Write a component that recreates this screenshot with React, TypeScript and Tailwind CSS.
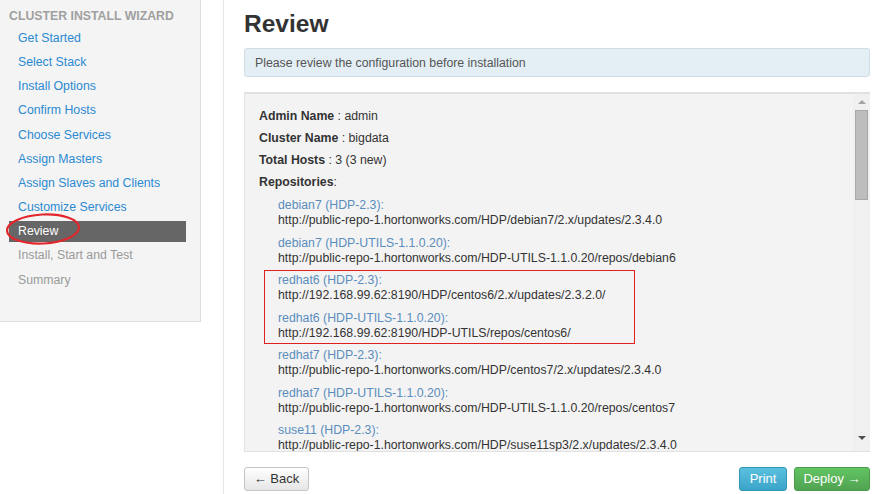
import React from "react";

const steps: { label: string; state: "link" | "active" | "disabled" }[] = [
  { label: "Get Started", state: "link" },
  { label: "Select Stack", state: "link" },
  { label: "Install Options", state: "link" },
  { label: "Confirm Hosts", state: "link" },
  { label: "Choose Services", state: "link" },
  { label: "Assign Masters", state: "link" },
  { label: "Assign Slaves and Clients", state: "link" },
  { label: "Customize Services", state: "link" },
  { label: "Review", state: "active" },
  { label: "Install, Start and Test", state: "disabled" },
  { label: "Summary", state: "disabled" },
];

const reposA = [
  { name: "debian7 (HDP-2.3):", url: "http://public-repo-1.hortonworks.com/HDP/debian7/2.x/updates/2.3.4.0" },
  { name: "debian7 (HDP-UTILS-1.1.0.20):", url: "http://public-repo-1.hortonworks.com/HDP-UTILS-1.1.0.20/repos/debian6" },
];
const reposB = [
  { name: "redhat6 (HDP-2.3):", url: "http://192.168.99.62:8190/HDP/centos6/2.x/updates/2.3.2.0/" },
  { name: "redhat6 (HDP-UTILS-1.1.0.20):", url: "http://192.168.99.62:8190/HDP-UTILS/repos/centos6/" },
];
const reposC = [
  { name: "redhat7 (HDP-2.3):", url: "http://public-repo-1.hortonworks.com/HDP/centos7/2.x/updates/2.3.4.0" },
  { name: "redhat7 (HDP-UTILS-1.1.0.20):", url: "http://public-repo-1.hortonworks.com/HDP-UTILS-1.1.0.20/repos/centos7" },
  { name: "suse11 (HDP-2.3):", url: "http://public-repo-1.hortonworks.com/HDP/suse11sp3/2.x/updates/2.3.4.0" },
];

function Repo({ name, url }: { name: string; url: string }) {
  return (
    <div className="leading-[15px] whitespace-nowrap">
      <div className="text-[#5a8dbd]">{name}</div>
      <div className="text-[#333]">{url}</div>
    </div>
  );
}

export default function App() {
  return (
    <div
      className="w-[882px] h-[494px] flex bg-white overflow-hidden text-[12.3px] text-[#333]"
      style={{ fontFamily: '"Liberation Sans", Arial, sans-serif' }}
    >
      {/* Sidebar */}
      <div className="w-[224px] h-full border-r border-[#e6e6e6] shrink-0">
        <div className="relative w-[201px] h-[322px] bg-[#f4f4f4] border-r border-b border-[#dddddd]">
          <div className="pl-[9px] pt-[9px] h-[26px] leading-[14px] font-bold text-[#a0a0a0] uppercase">
            Cluster Install Wizard
          </div>
          <div className="flex flex-col gap-[3.2px] mt-[1.5px]">
            {steps.map((s) => (
              <div
                key={s.label}
                className={
                  "ml-[9px] w-[177px] h-[21px] pl-[9px] flex items-center " +
                  (s.state === "active"
                    ? "bg-[#666666] text-white"
                    : s.state === "link"
                    ? "text-[#2b8ad2]"
                    : "text-[#9a9a9a]")
                }
              >
                {s.label}
              </div>
            ))}
          </div>
          {/* red annotation ellipse */}
          <svg className="absolute left-[4px] top-[210px]" width="80" height="38" viewBox="0 0 80 38">
            <ellipse cx="39" cy="19" rx="36" ry="14.5" fill="none" stroke="#e3262b" strokeWidth="2.2" transform="rotate(-3 39 19)" />
          </svg>
        </div>
      </div>

      {/* Main */}
      <div className="w-[626px] ml-[20px] flex flex-col">
        <div className="h-[48px] pt-[9px]">
          <h2 className="text-[24.5px] leading-[30px] font-bold text-[#333]">Review</h2>
        </div>
        <div className="h-[29px] bg-[#e4eff5] border border-[#cfdee6] rounded-[3px] pl-[10px] pt-[1px] flex items-center text-[#555]">
          Please review the configuration before installation
        </div>
        <div className="mt-[15px] h-[360px] bg-[#f3f3f3] border-t-2 border-b border-l border-[#e1e1e1] flex">
          <div className="flex-1 pl-[14px] pt-[15px] overflow-hidden">
            <div className="flex flex-col gap-[7px] leading-[15px]">
              <div>
                <span className="font-bold">Admin Name</span> : admin
              </div>
              <div>
                <span className="font-bold">Cluster Name</span> : bigdata
              </div>
              <div>
                <span className="font-bold">Total Hosts</span> : 3 (3 new)
              </div>
              <div>
                <span className="font-bold">Repositories</span>:
              </div>
            </div>
            <div className="pl-[19px] mt-[8px] flex flex-col gap-[7.5px]">
              {reposA.map((r) => (
                <Repo key={r.name} {...r} />
              ))}
              <div className="relative flex flex-col gap-[7.5px]">
                {reposB.map((r) => (
                  <Repo key={r.name} {...r} />
                ))}
                <div className="absolute left-[-14px] top-[-3.5px] w-[371px] h-[74px] border border-[#e01f1f]" />
              </div>
              {reposC.map((r) => (
                <Repo key={r.name} {...r} />
              ))}
            </div>
          </div>
          {/* scrollbar */}
          <div className="w-[17px] h-full bg-[#f0f0f0] flex flex-col items-center">
            <div className="h-[16px] flex items-center justify-center">
              <div className="w-0 h-0 border-l-[4px] border-r-[4px] border-b-[4px] border-l-transparent border-r-transparent border-b-[#a3a3a3]" />
            </div>
            <div className="w-[13px] h-[90px] bg-[#bdbdbd] border border-[#a8a8a8]" />
            <div className="flex-1" />
            <div className="h-[20px] pb-[6px] flex items-center justify-center">
              <div className="w-0 h-0 border-l-[4px] border-r-[4px] border-t-[4px] border-l-transparent border-r-transparent border-t-[#505050]" />
            </div>
          </div>
        </div>
        <div className="mt-[15px] flex items-start justify-between">
          <button className="h-[24px] w-[65px] border border-[#c5c5c5] rounded-[3px] bg-gradient-to-b from-white to-[#e6e6e6] text-[#333] text-[13px] flex items-center justify-center">
            ← Back
          </button>
          <div className="flex gap-[7px]">
            <button className="h-[24px] w-[48px] border border-[#2f96b4] rounded-[3px] bg-gradient-to-b from-[#5bc0de] to-[#3aa4c9] text-white text-[13px] flex items-center justify-center">
              Print
            </button>
            <button className="h-[24px] w-[76px] border border-[#4a9a4a] rounded-[3px] bg-gradient-to-b from-[#62c462] to-[#51a351] text-white text-[13px] flex items-center justify-center">
              Deploy →
            </button>
          </div>
        </div>
      </div>
    </div>
  );
}
